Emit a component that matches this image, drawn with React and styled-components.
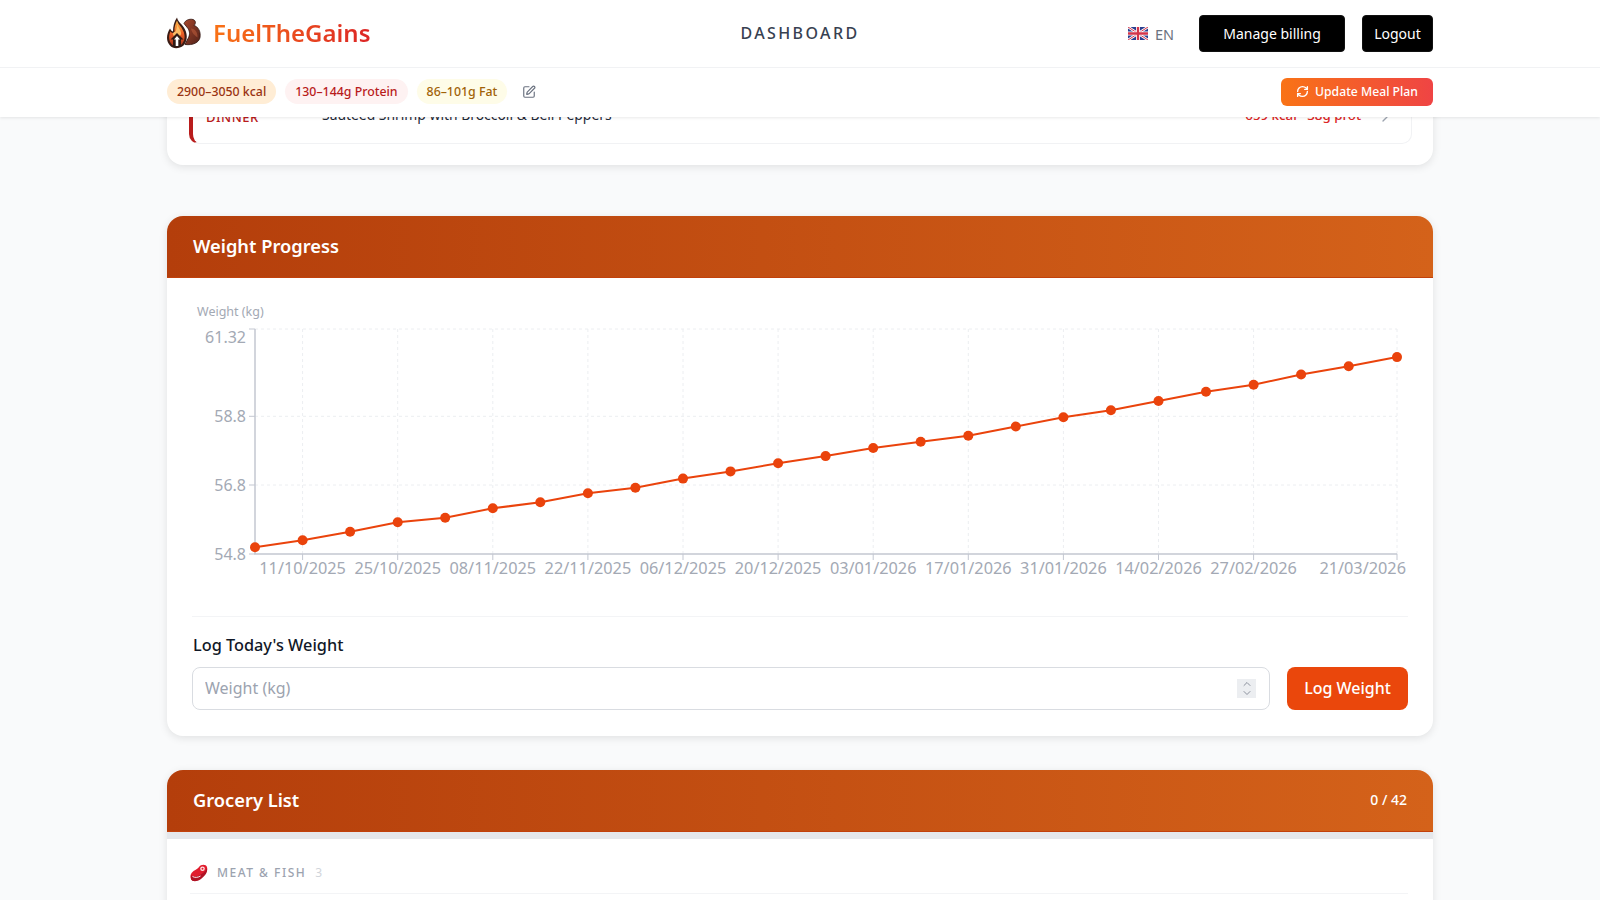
import React from 'react';
import styled, { createGlobalStyle } from 'styled-components';
import { SquarePen, RefreshCw, ChevronRight, ChevronUp, ChevronDown } from 'lucide-react';

const FONT = '"Noto Sans", "Open Sans", sans-serif';

const points = [
  [255, 547.3], [302.6, 540.3], [350.1, 531.7], [397.7, 522.3], [445.2, 517.7],
  [492.8, 508.3], [540.3, 502.3], [587.9, 493.3], [635.4, 487.7], [683, 478.6],
  [730.5, 471.4], [778.1, 463.3], [825.6, 456.1], [873.2, 448], [920.7, 441.8],
  [968.3, 435.7], [1015.8, 426.5], [1063.4, 417.3], [1110.9, 410.2], [1158.5, 401],
  [1206, 391.8], [1253.6, 384.7], [1301.1, 374.5], [1348.7, 366.3], [1397, 357.1],
];

const xTicks = [
  [302.6, '11/10/2025'], [397.7, '25/10/2025'], [492.8, '08/11/2025'], [587.9, '22/11/2025'],
  [683, '06/12/2025'], [778.1, '20/12/2025'], [873.2, '03/01/2026'], [968.3, '17/01/2026'],
  [1063.4, '31/01/2026'], [1158.5, '14/02/2026'], [1253.6, '27/02/2026'],
];

// the top label sits under its tick, the others are centred on theirs
const yTicks = [
  [329, '61.32', 343], [416.3, '58.8', 422], [485, '56.8', 491], [554, '54.8', 560],
];

const GlobalStyle = createGlobalStyle`
  html, body {
    margin: 0;
    padding: 0;
    background: #f9fafb;
    font-family: ${FONT};
  }
  * { box-sizing: border-box; }
`;

const Page = styled.div`
  height: 100vh;
  overflow: hidden;
`;

const TopBar = styled.header`
  position: relative;
  z-index: 10;
  background: #fff;
  box-shadow: 0 1px 3px rgba(0, 0, 0, .09);
`;

const NavRow = styled.div`
  height: 68px;
  border-bottom: 1px solid #f1f2f4;
`;

const NavInner = styled.div`
  width: 1266px;
  height: 100%;
  margin: 0 auto;
  display: grid;
  grid-template-columns: 1fr auto 1fr;
  align-items: center;
`;

const Brand = styled.div`
  display: flex;
  align-items: center;
  gap: 12px;
  padding-bottom: 2px;
`;

const BrandName = styled.span`
  font-size: 24px;
  font-weight: 600;
  background: linear-gradient(90deg, #f97316, #dc2626);
  -webkit-background-clip: text;
  background-clip: text;
  color: transparent;
`;

const PageTitle = styled.div`
  padding-bottom: 2px;
  font-size: 16px;
  font-weight: 500;
  letter-spacing: 2.4px;
  color: #374151;
`;

const NavActions = styled.div`
  display: flex;
  align-items: center;
  justify-content: flex-end;
`;

const Lang = styled.div`
  display: flex;
  align-items: center;
  gap: 7px;
  margin-right: 25px;
  font-size: 14.500px;
  color: #6b7280;
`;

const BlackButton = styled.button`
  height: 37px;
  width: ${p => p.$width}px;
  margin-left: ${p => p.$gap}px;
  border: 1px solid #111;
  border-radius: 4px;
  background: #000;
  color: #fff;
  font-family: inherit;
  font-size: 14px;
`;

const SubRow = styled.div`
  width: 1266px;
  height: 49px;
  margin: 0 auto;
  padding-bottom: 2px;
  display: flex;
  align-items: center;
  gap: 9px;
`;

const Pill = styled.span`
  height: 25px;
  padding: 0 10px;
  display: inline-flex;
  align-items: center;
  border-radius: 13px;
  font-size: 12.350px;
  font-weight: 500;
  background: ${p => p.$bg};
  color: ${p => p.$fg};
`;

const EditBtn = styled.span`
  display: inline-flex;
  margin-left: 6px;
  color: #6b7280;
`;

const UpdateButton = styled.button`
  margin-left: auto;
  width: 152px;
  height: 28px;
  display: flex;
  align-items: center;
  justify-content: center;
  gap: 6px;
  border: 0;
  border-radius: 6px;
  background: linear-gradient(90deg, #f97316, #ef4444);
  color: #fff;
  font-family: inherit;
  font-size: 12.200px;
  font-weight: 500;
`;

const Main = styled.main`
  width: 1266px;
  margin: 0 auto;
`;

const MealCard = styled.section`
  margin-top: -27px;
  padding: 0 21px 21px 22px;
  background: #fff;
  border-radius: 0 0 16px 16px;
  box-shadow: 0 2px 8px rgba(0, 0, 0, .1);
`;

const MealRow = styled.div`
  height: 54px;
  padding: 0 18px 0 13px;
  display: flex;
  align-items: center;
  background: #fff;
  border: 1px solid #f1f2f4;
  border-left: 4px solid #b91c1c;
  border-radius: 10px;
`;

const MealType = styled.span`
  width: 116px;
  font-size: 13px;
  font-weight: 500;
  letter-spacing: .5px;
  color: #b91c1c;
`;

const MealName = styled.span`
  flex: 1;
  margin-bottom: 6px;
  font-size: 13.900px;
  color: #1f2937;
`;

const MealMacros = styled.span`
  margin-right: 16px;
  margin-bottom: 4px;
  font-size: 13.300px;
  font-weight: 500;
  color: #dc2626;
`;

const Card = styled.section`
  margin-top: ${p => p.$top}px;
  background: #fff;
  border-radius: 16px;
  box-shadow: 0 2px 8px rgba(0, 0, 0, .1);
  overflow: hidden;
`;

const CardHeader = styled.div`
  height: 62px;
  padding: 0 26px 2px 26px;
  display: flex;
  align-items: center;
  justify-content: space-between;
  background: linear-gradient(90deg, #b43e0b, #d4621a);
  border-bottom: 1px solid #c2410c;
  color: #fff;
`;

const CardTitle = styled.h2`
  margin: 0;
  font-size: 18.300px;
  font-weight: 600;
`;

const Counter = styled.span`
  font-size: 14px;
  font-weight: 500;
`;

const CardBody = styled.div`
  padding: 22px 25px 26px;
`;

const Chart = styled.svg`
  display: block;
  width: 1216px;
  height: 290px;
  font-family: ${FONT};
`;

const Divider = styled.div`
  height: 1px;
  margin-top: 26px;
  background: #f3f4f6;
`;

const FieldLabel = styled.label`
  display: block;
  margin-top: 17px;
  padding-left: 1px;
  font-size: 16.300px;
  font-weight: 500;
  color: #111827;
`;

const FieldRow = styled.div`
  margin-top: 11px;
  display: flex;
  gap: 17px;
`;

const InputBox = styled.div`
  flex: 1;
  height: 43px;
  padding: 0 13px 0 12px;
  display: flex;
  align-items: center;
  border: 1px solid #d9dce1;
  border-radius: 8px;
  background: #fff;
`;

const WeightInput = styled.input`
  flex: 1;
  margin-bottom: 2px;
  padding: 0;
  border: 0;
  outline: 0;
  font-family: inherit;
  font-size: 16px;
  color: #111827;
  &::placeholder { color: #9ca3af; }
`;

const Spinner = styled.span`
  width: 19px;
  height: 19px;
  display: flex;
  flex-direction: column;
  align-items: center;
  justify-content: center;
  background: #eceef1;
  color: #6b7280;
  svg { display: block; margin: -1.500px 0; }
`;

const LogButton = styled.button`
  width: 121px;
  height: 43px;
  padding-bottom: 2px;
  border: 0;
  border-radius: 8px;
  background: #ea470c;
  color: #fff;
  font-family: inherit;
  font-size: 16px;
  font-weight: 500;
`;

const GroceryBody = styled.div`
  min-height: 200px;
  border-top: 7px solid #e5e7eb;
  padding: 12px 25px 0 23px;
`;

const Category = styled.div`
  height: 43px;
  padding-top: 1px;
  display: flex;
  align-items: center;
  gap: 9px;
  border-bottom: 1px solid #f3f4f6;
`;

const CategoryName = styled.span`
  font-size: 12px;
  font-weight: 500;
  letter-spacing: 1.500px;
  color: #9ca3af;
`;

const CategoryCount = styled.span`
  font-size: 12px;
  color: #d1d5db;
`;

const FlameLogo = () => (
  <svg width="34" height="32" viewBox="0 0 34 31">
    <defs>
      <linearGradient id="flame" x1="0" y1="0" x2="0" y2="1">
        <stop offset="0" stopColor="#fdb94a" />
        <stop offset=".5" stopColor="#ec5f26" />
        <stop offset="1" stopColor="#a8331a" />
      </linearGradient>
      <linearGradient id="arm" x1="0" y1="0" x2="1" y2="1">
        <stop offset="0" stopColor="#a8472c" />
        <stop offset="1" stopColor="#51221a" />
      </linearGradient>
    </defs>
    {/* flexed arm */}
    <path d="M17 6C18 3 22 1 26 2C29 3 29 6 27 8C31 9 34 14 33 20C32 25 26 28 18 27L21 21C23 18 23 14 21 11C20 9 18 8 17 6Z" fill="url(#arm)" stroke="#2f130e" strokeWidth=".8" />
    <path d="M24 11C28 11 31 15 30.500 20C28 18 25 16 24 11Z" fill="#b85a3a" opacity=".6" />
    {/* flame */}
    <path d="M10 0C11 5 16 7 18 12C21 18 20 24 16.500 28C12 31.500 6 31.500 3 28C-1 24 -1 17 3 11C4 13 5 14 6 14C6 9 7 4 10 0Z" fill="#3a1c15" />
    <path d="M10 3C11 7 14.500 9 16 13C18.500 18 18 23 15 26.500C12 29.500 7 29.500 4.500 26.500C1.500 23 1.500 18 3.500 14C5 16 7 16 7.500 14C7 10 8.500 6 10 3Z" fill="url(#flame)" />
    <path d="M10.500 7C11 10 13.500 12 14 15C14.500 17 13.500 18 12.500 18.500H7C5.500 17.500 5.500 15.500 7 14.500C8.500 15 9 13 9.500 11C9.800 10 10.200 8.500 10.500 7Z" fill="#ffd77a" opacity=".75" />
    {/* arrow */}
    <path d="M10 15.500L16.500 22H14V29.500H6V22H3.500Z" fill="#2f1a15" />
    <path d="M10 18.500L13 22H11.300V28.500H8.700V22H7Z" fill="#fff" />
  </svg>
);

const UkFlag = () => (
  <svg width="20" height="13" viewBox="0 0 60 39">
    <rect width="60" height="39" rx="3" fill="#2a3f8f" />
    <path d="M0 0L60 39M60 0L0 39" stroke="#fff" strokeWidth="8" />
    <path d="M0 0L60 39M60 0L0 39" stroke="#d3344a" strokeWidth="3" />
    <path d="M30 0V39M0 19.500H60" stroke="#fff" strokeWidth="12" />
    <path d="M30 0V39M0 19.500H60" stroke="#d3344a" strokeWidth="7" />
  </svg>
);

const MeatIcon = () => (
  <svg width="18" height="18" viewBox="0 0 18 18">
    <path d="M1 10C3 6 7 6 9 3C11 0 16 0 17 3C18 7 15 11 11 14C7 17 2 18 1 15C0 13 .5 11 1 10Z" fill="#e11d2e" />
    <path d="M1 11C3 13 7 13 10 11C13 9 16 7 17 4C18 8 15 12 11 15C7 18 2 18 1 15Z" fill="#b01224" />
    <circle cx="12.500" cy="4.800" r="2.300" fill="#fde4e4" />
    <circle cx="12.500" cy="4.800" r="1" fill="#e11d2e" />
    <path d="M2.500 12.500C5 14 8 13.500 10.500 12" stroke="#fff" strokeWidth=".9" fill="none" />
  </svg>
);

const WeightChart = () => (
  <Chart viewBox="192 300 1216 290">
    <text x="197" y="316" fontSize="12.500" fill="#a3a9b4">Weight (kg)</text>
    {yTicks.slice(0, 3).map(([y]) => (
      <line key={y} x1="255" x2="1397" y1={y} y2={y} stroke="#eceef1" strokeDasharray="3 3" />
    ))}
    {xTicks.map(([x]) => (
      <line key={x} x1={x} x2={x} y1="329" y2="554" stroke="#eceef1" strokeDasharray="3 3" />
    ))}
    <line x1="1397" x2="1397" y1="329" y2="554" stroke="#eceef1" strokeDasharray="3 3" />
    <path d="M255 329V554H1397" fill="none" stroke="#c3c7d1" strokeWidth="1.500" />
    {yTicks.map(([y, label, textY]) => (
      <g key={label}>
        <line x1="249" x2="255" y1={y} y2={y} stroke="#c3c7d1" />
        <text x="246" y={textY} textAnchor="end" fontSize="16" fill="#a3a9b4">{label}</text>
      </g>
    ))}
    {xTicks.map(([x, label]) => (
      <g key={label}>
        <line x1={x} x2={x} y1="554" y2="560" stroke="#c3c7d1" />
        <text x={x} y="574" textAnchor="middle" fontSize="16.300" fill="#a3a9b4">{label}</text>
      </g>
    ))}
    <line x1="1397" x2="1397" y1="554" y2="560" stroke="#c3c7d1" />
    <text x="1406" y="574" textAnchor="end" fontSize="16.300" fill="#a3a9b4">21/03/2026</text>
    <polyline points={points.map(p => p.join(',')).join(' ')} fill="none" stroke="#ea430c" strokeWidth="2" />
    {points.map(([x, y]) => (
      <circle key={x} cx={x} cy={y} r="5" fill="#ea430c" />
    ))}
  </Chart>
);

export default function App() {
  return (
    <Page>
      <GlobalStyle />
      <TopBar>
        <NavRow>
          <NavInner>
            <Brand>
              <FlameLogo />
              <BrandName>FuelTheGains</BrandName>
            </Brand>
            <PageTitle>DASHBOARD</PageTitle>
            <NavActions>
              <Lang><UkFlag />EN</Lang>
              <BlackButton $width={146} $gap={0}>Manage billing</BlackButton>
              <BlackButton $width={71} $gap={17}>Logout</BlackButton>
            </NavActions>
          </NavInner>
        </NavRow>
        <SubRow>
          <Pill $bg="#ffedd5" $fg="#9a3412">2900–3050 kcal</Pill>
          <Pill $bg="#fef2f2" $fg="#b91c1c">130–144g Protein</Pill>
          <Pill $bg="#fefce8" $fg="#a16207">86–101g Fat</Pill>
          <EditBtn><SquarePen size={14} /></EditBtn>
          <UpdateButton><RefreshCw size={13} strokeWidth={2.500} />Update Meal Plan</UpdateButton>
        </SubRow>
      </TopBar>
      <Main>
        <MealCard>
          <MealRow>
            <MealType>DINNER</MealType>
            <MealName>Sautéed Shrimp with Broccoli &amp; Bell Peppers</MealName>
            <MealMacros>659 kcal · 38g prot</MealMacros>
            <ChevronRight size={16} color="#9ca3af" />
          </MealRow>
        </MealCard>
        <Card $top={51}>
          <CardHeader>
            <CardTitle>Weight Progress</CardTitle>
          </CardHeader>
          <CardBody>
            <WeightChart />
            <Divider />
            <FieldLabel htmlFor="weight">Log Today's Weight</FieldLabel>
            <FieldRow>
              <InputBox>
                <WeightInput id="weight" placeholder="Weight (kg)" />
                <Spinner>
                  <ChevronUp size={12} strokeWidth={1.500} />
                  <ChevronDown size={12} strokeWidth={1.500} />
                </Spinner>
              </InputBox>
              <LogButton>Log Weight</LogButton>
            </FieldRow>
          </CardBody>
        </Card>
        <Card $top={34}>
          <CardHeader>
            <CardTitle>Grocery List</CardTitle>
            <Counter>0 / 42</Counter>
          </CardHeader>
          <GroceryBody>
            <Category>
              <MeatIcon />
              <CategoryName>MEAT &amp; FISH</CategoryName>
              <CategoryCount>3</CategoryCount>
            </Category>
          </GroceryBody>
        </Card>
      </Main>
    </Page>
  );
}
